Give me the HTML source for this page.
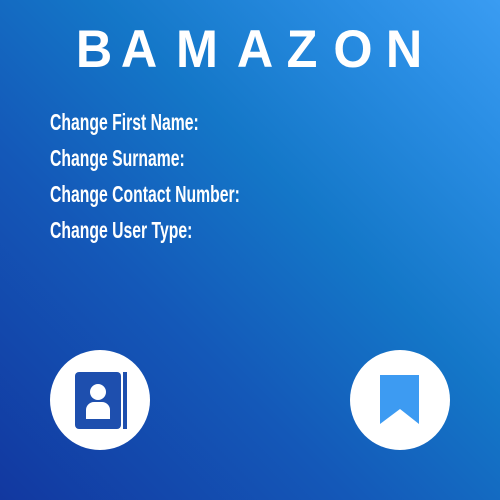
<!DOCTYPE html>
<html><head><style>
html,body{margin:0;padding:0}
body{width:500px;height:500px;position:relative;overflow:hidden;
background:linear-gradient(45deg,#1238a0 0%,#1458b8 35%,#1477c8 60%,#2a8ee4 85%,#3a9cf2 100%);
font-family:"Liberation Sans",sans-serif;color:#fff}
.L{position:absolute;top:20px;font-size:53px;font-weight:bold;line-height:60px;width:60px;text-align:center;transform:scaleX(0.95)}
.t{position:absolute;left:50px;font-size:23.5px;line-height:26px;transform-origin:0 0;transform:scaleX(0.67);white-space:nowrap;font-weight:bold}
.c{position:absolute;width:100px;height:100px;border-radius:50%;background:#fff;top:350px}
</style></head><body>
<div class="L" style="left:64px">B</div>
<div class="L" style="left:109px">A</div>
<div class="L" style="left:167px">M</div>
<div class="L" style="left:225px">A</div>
<div class="L" style="left:272px">Z</div>
<div class="L" style="left:323px">O</div>
<div class="L" style="left:374px">N</div>
<div class="t" style="top:109px">Change First Name:</div>
<div class="t" style="top:145px">Change Surname:</div>
<div class="t" style="top:181px">Change Contact Number:</div>
<div class="t" style="top:217px">Change User Type:</div>
<div class="c" style="left:50px">
<svg width="100" height="100" viewBox="0 0 100 100">
<rect x="25" y="22" width="46" height="57" rx="4" fill="#1e4fae"/>
<rect x="73" y="22" width="4" height="57" fill="#1e4fae"/>
<circle cx="48" cy="42" r="8" fill="#fff"/>
<path d="M36 69 V60 A8 8 0 0 1 44 52 H52 A8 8 0 0 1 60 60 V69 Z" fill="#fff"/>
</svg></div>
<div class="c" style="left:350px">
<svg width="100" height="100" viewBox="0 0 100 100">
<path d="M30 25 H69 V74 L50 59 L30 74 Z" fill="#3d9bf2"/>
</svg></div>
</body></html>
